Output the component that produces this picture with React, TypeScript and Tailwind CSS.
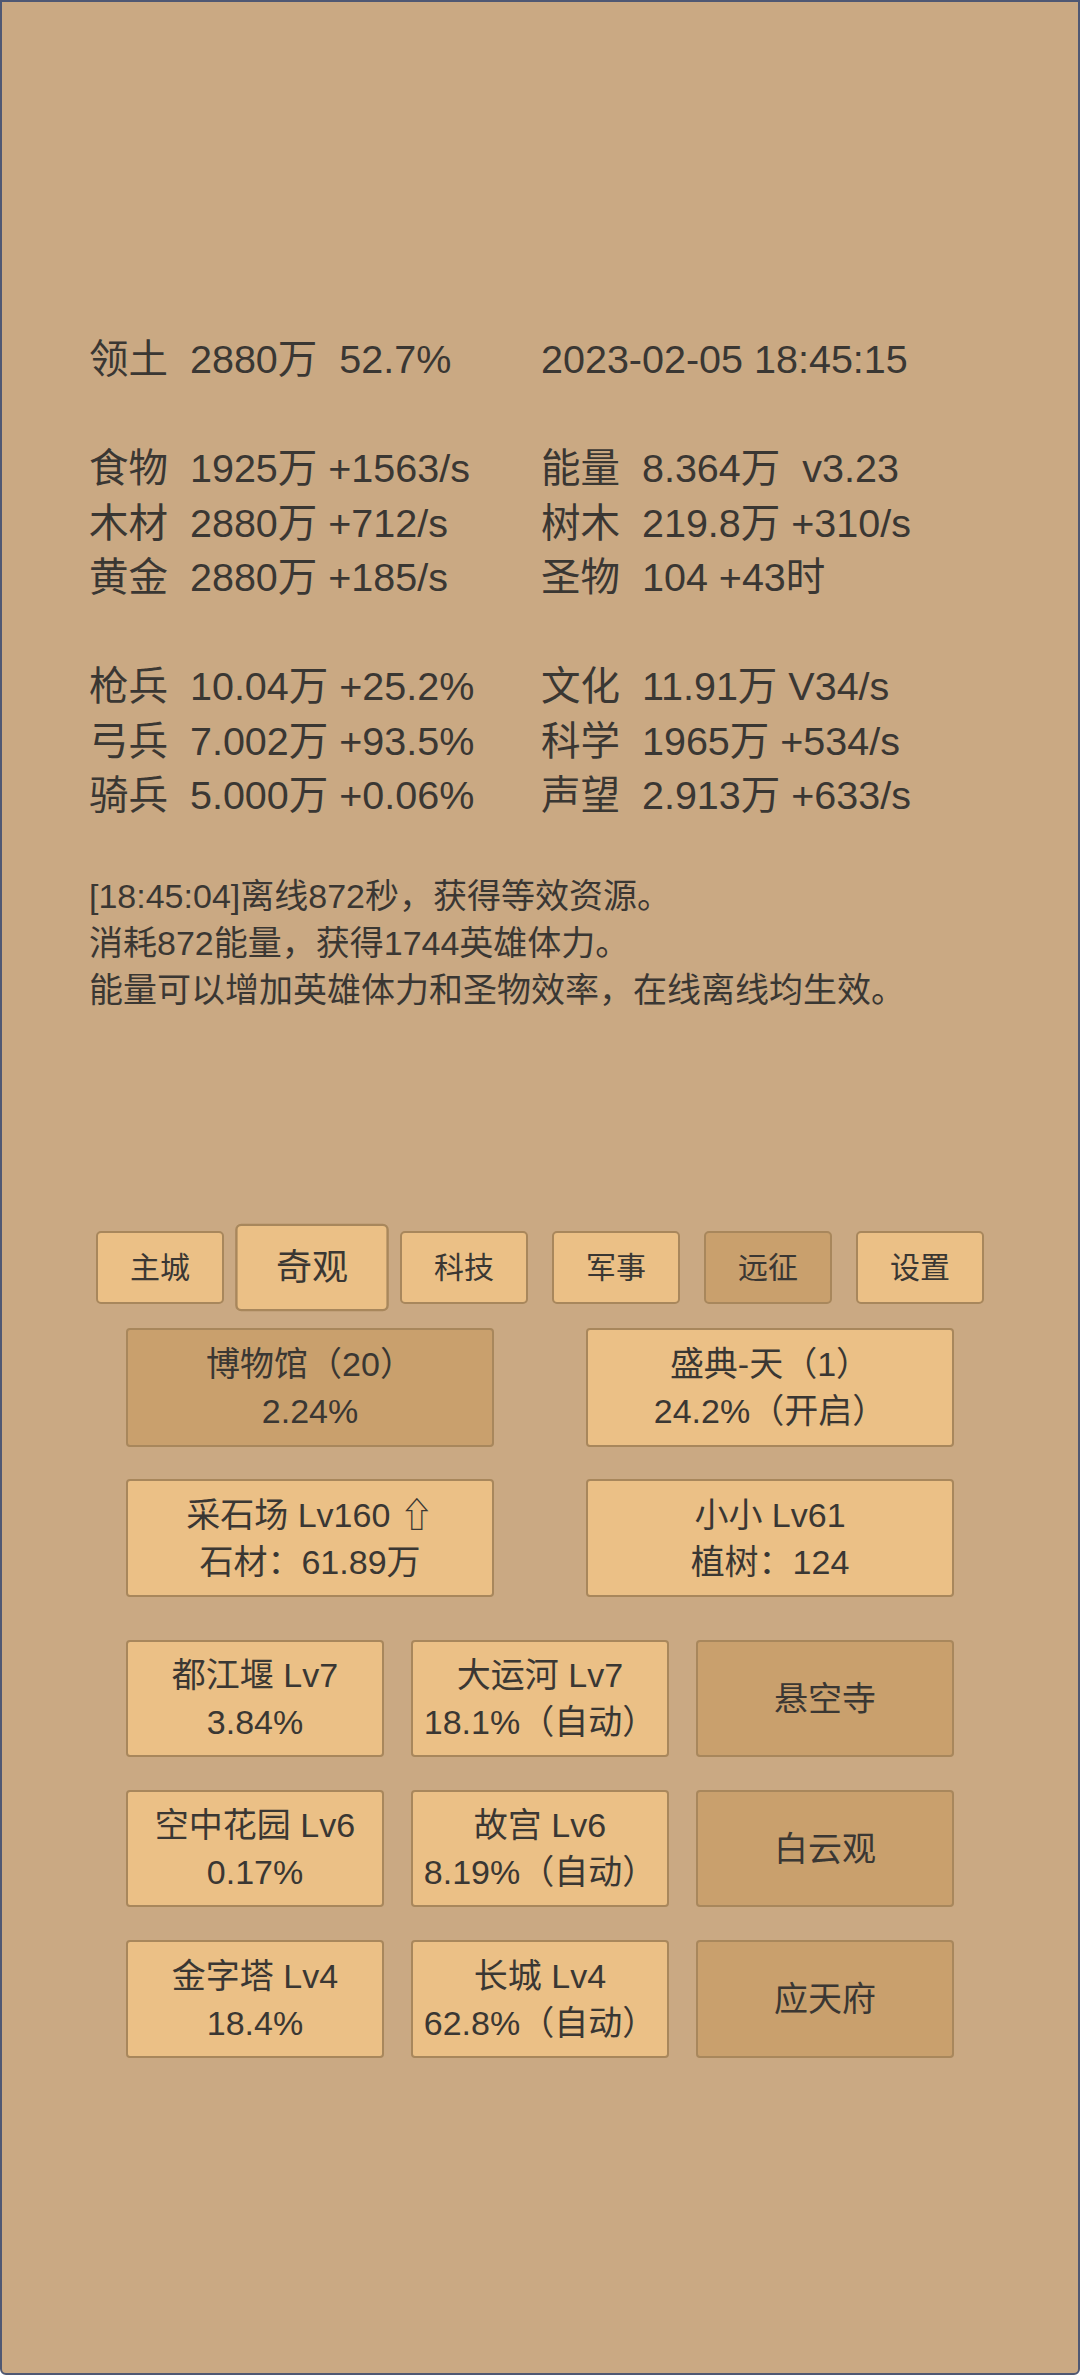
import React from "react";

const FONT = { fontFamily: '"Liberation Sans", "Noto Sans CJK SC", sans-serif' };

const stats: [string, string][] = [
  ["领土  2880万  52.7%", "2023-02-05 18:45:15"],
  ["", ""],
  ["食物  1925万 +1563/s", "能量  8.364万  v3.23"],
  ["木材  2880万 +712/s", "树木  219.8万 +310/s"],
  ["黄金  2880万 +185/s", "圣物  104 +43时"],
  ["", ""],
  ["枪兵  10.04万 +25.2%", "文化  11.91万 V34/s"],
  ["弓兵  7.002万 +93.5%", "科学  1965万 +534/s"],
  ["骑兵  5.000万 +0.06%", "声望  2.913万 +633/s"],
];

const tabs = [
  { t: "主城" },
  { t: "奇观", sel: true },
  { t: "科技" },
  { t: "军事" },
  { t: "远征", dark: true },
  { t: "设置" },
];

function Card({ lines, dark, w }: { lines: string[]; dark?: boolean; w: string }) {
  return (
    <div
      className={`${w} flex flex-col items-center justify-center pt-[2px] rounded-[4px] border-2 border-[#a8875c] text-[34px] leading-[47px] whitespace-pre ${
        dark ? "bg-[#c9a06d]" : "bg-[#ebc086]"
      }`}
    >
      {lines.map((l, i) => (
        <div key={i}>{l}</div>
      ))}
    </div>
  );
}

export default function App() {
  return (
    <div
      className="w-[1080px] h-[2375px] bg-[#caa983] border-2 border-[#4f5873] rounded-b-[6px] text-[#3a3733] overflow-hidden"
      style={FONT}
    >
      <div className="pt-[330px] pl-[87px]">
        <div className="grid grid-cols-[452px_auto] text-[39.5px] leading-[54.5px] whitespace-pre">
          {stats.map(([a, b], i) => (
            <React.Fragment key={i}>
              <div className="h-[54.5px]">{a}</div>
              <div className="h-[54.5px]">{b}</div>
            </React.Fragment>
          ))}
        </div>
        <div className="mt-[50px] text-[34px] leading-[47px]">
          <div>[18:45:04]离线872秒，获得等效资源。</div>
          <div>消耗872能量，获得1744英雄体力。</div>
          <div>能量可以增加英雄体力和圣物效率，在线离线均生效。</div>
        </div>
      </div>

      <div className="mt-[217px] flex justify-center gap-[24px]">
        {tabs.map((b) => (
          <div
            key={b.t}
            className={`w-[128px] h-[73px] flex items-center justify-center rounded-[5px] border-2 border-[#a8875c] text-[30px] ${
              b.dark ? "bg-[#c9a06d]" : "bg-[#ebc086]"
            } ${b.sel ? "scale-[1.2]" : ""}`}
          >
            {b.t}
          </div>
        ))}
      </div>

      <div className="mt-[24px] flex flex-col items-center">
        <div className="flex gap-[92px] h-[119px]">
          <Card w="w-[368px]" dark lines={["博物馆（20）", "2.24%"]} />
          <Card w="w-[368px]" lines={["盛典-天（1）", "24.2%（开启）"]} />
        </div>
        <div className="mt-[32px] flex gap-[92px] h-[118px]">
          <Card w="w-[368px]" lines={["采石场 Lv160 ⇧", "石材：61.89万"]} />
          <Card w="w-[368px]" lines={["小小 Lv61", "植树：124"]} />
        </div>
        <div className="mt-[43px] flex gap-[27px] h-[117px]">
          <Card w="w-[258px]" lines={["都江堰 Lv7", "3.84%"]} />
          <Card w="w-[258px]" lines={["大运河 Lv7", "18.1%（自动）"]} />
          <Card w="w-[258px]" dark lines={["悬空寺"]} />
        </div>
        <div className="mt-[33px] flex gap-[27px] h-[117px]">
          <Card w="w-[258px]" lines={["空中花园 Lv6", "0.17%"]} />
          <Card w="w-[258px]" lines={["故宫 Lv6", "8.19%（自动）"]} />
          <Card w="w-[258px]" dark lines={["白云观"]} />
        </div>
        <div className="mt-[33px] flex gap-[27px] h-[118px]">
          <Card w="w-[258px]" lines={["金字塔 Lv4", "18.4%"]} />
          <Card w="w-[258px]" lines={["长城 Lv4", "62.8%（自动）"]} />
          <Card w="w-[258px]" dark lines={["应天府"]} />
        </div>
      </div>
    </div>
  );
}
